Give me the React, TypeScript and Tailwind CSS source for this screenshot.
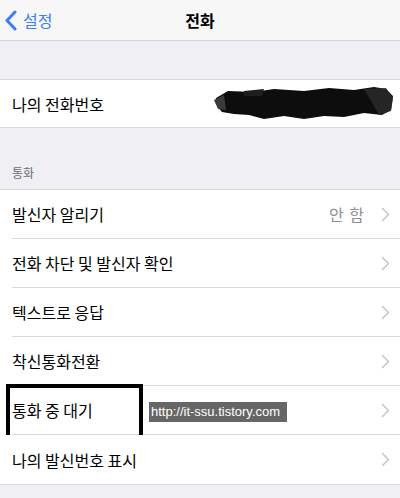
import React from "react";

const font = { fontFamily: '"Noto Sans CJK KR", "Noto Sans", sans-serif' };

function Chevron() {
  return (
    <svg width="9" height="15" viewBox="0 0 9 15" className="shrink-0">
      <path d="M1.5 1.5 L7.5 7.5 L1.5 13.5" fill="none" stroke="#c7c7cc" strokeWidth="1.6" strokeLinecap="round" strokeLinejoin="round" />
    </svg>
  );
}

function Row({ label, value, last, children }: { label: string; value?: string; last?: boolean; children?: React.ReactNode }) {
  return (
    <div className="relative h-[49px] bg-white pl-[12px]">
      <div className={`flex h-full items-center pr-[10px] ${last ? "" : "border-b border-[#d9d9dd]"}`}>
        <span className="flex-1 text-[16px] text-black">{label}</span>
        {value && <span className="mr-[16px] text-[16px] tracking-[1px] text-[#8e8e93]">{value}</span>}
        <Chevron />
      </div>
      {children}
    </div>
  );
}

export default function App() {
  return (
    <div className="h-[498px] w-[400px] overflow-hidden bg-[#efeff4]" style={font}>
      <div className="relative flex h-[41px] items-center border-b border-[#d4d4d8] bg-[#f7f7f8]">
        <div className="flex items-center pl-[5px]">
          <svg width="12" height="21" viewBox="0 0 12 21">
            <path d="M10 2 L2 10.5 L10 19" fill="none" stroke="#3a7ff1" strokeWidth="3" strokeLinecap="round" strokeLinejoin="round" />
          </svg>
          <span className="ml-[6px] text-[16px] text-[#3a7ff1]">설정</span>
        </div>
        <span className="absolute left-0 right-0 text-center text-[16px] font-bold text-black">전화</span>
      </div>

      <div className="h-[38px]" />

      <div className="flex h-[49px] items-center justify-between border-y border-[#d9d9dd] bg-white pl-[12px] pr-[6px]">
        <span className="text-[16px] text-black">나의 전화번호</span>
        <svg width="180" height="36" viewBox="0 0 180 36">
          <path d="M2 12 L14 5 L40 6 L60 3 L90 5 L115 2 L140 4 L160 1 L172 3 L179 10 L177 24 L168 29 L150 27 L130 31 L110 30 L90 33 L70 30 L50 33 L35 29 L20 28 L8 26 L3 20 Z" fill="#0d0d0d" />
          <path d="M150 3 L172 2 L179 12 L177 25 L165 29 L160 20 Z" fill="#2a2a2a" opacity="0.85" />
          <path d="M0 14 L10 9 L12 24 L4 23 Z" fill="#3a3a3a" />
          <path d="M30 5 L50 3 L48 10 L30 10 Z" fill="#1e1e1e" />
        </svg>
      </div>

      <div className="flex h-[62px] items-end border-b border-[#d9d9dd] pb-[7px] pl-[12px]">
        <span className="text-[12px] text-[#6d6d72]">통화</span>
      </div>

      <div className="border-b border-[#d9d9dd]">
        <Row label="발신자 알리기" value="안 함" />
        <Row label="전화 차단 및 발신자 확인" />
        <Row label="텍스트로 응답" />
        <Row label="착신통화전환" />
        <Row label="통화 중 대기">
          <div className="pointer-events-none absolute left-[6px] top-[-2px] h-[57px] w-[137px] border-[4px] border-black" />
          <div
            className="absolute left-[149px] top-[16px] flex h-[20px] w-[138px] items-center bg-[#666666] pl-[2px] text-[13px] text-white"
            style={{ fontFamily: '"Liberation Sans", Arial, sans-serif' }}
          >
            http://it-ssu.tistory.com
          </div>
        </Row>
        <Row label="나의 발신번호 표시" last />
      </div>
    </div>
  );
}
